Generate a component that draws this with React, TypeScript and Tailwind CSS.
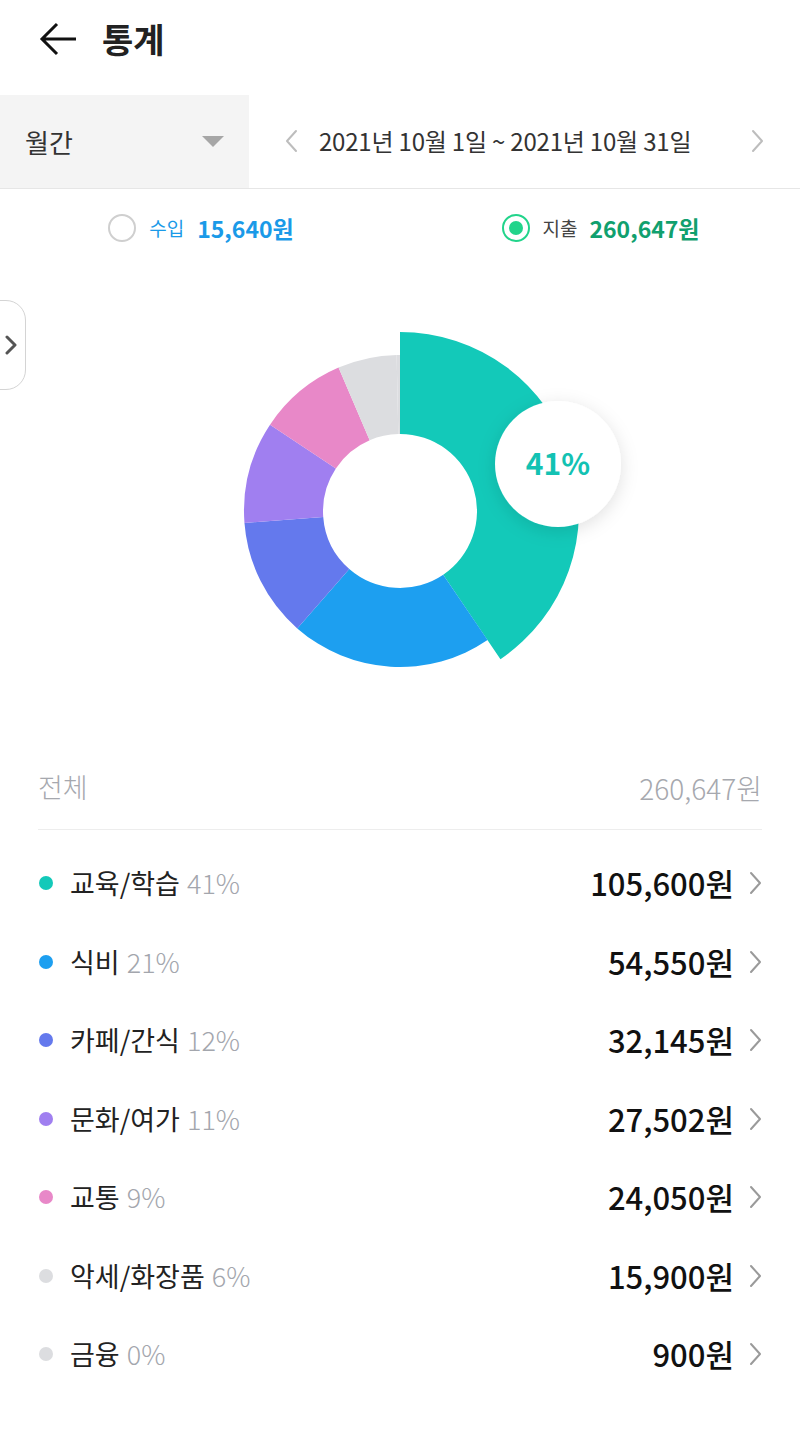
import React from 'react';

const categories = [
  { name: '교육/학습', pct: '41%', amount: 105600, color: '#13c9b9' },
  { name: '식비', pct: '21%', amount: 54550, color: '#1d9ff0' },
  { name: '카페/간식', pct: '12%', amount: 32145, color: '#6479ed' },
  { name: '문화/여가', pct: '11%', amount: 27502, color: '#a07ff0' },
  { name: '교통', pct: '9%', amount: 24050, color: '#e888c8' },
  { name: '악세/화장품', pct: '6%', amount: 15900, color: '#dcdde0' },
  { name: '금융', pct: '0%', amount: 900, color: '#dcdde0' },
];

const total = 260647;

// donut slice path, angles in degrees clockwise from top
const slicePath = (cx: number, cy: number, r1: number, r2: number, a0: number, a1: number) => {
  const rad = (a: number) => ((a - 90) * Math.PI) / 180;
  const p = (r: number, a: number) => `${cx + r * Math.cos(rad(a))} ${cy + r * Math.sin(rad(a))}`;
  const large = a1 - a0 > 180 ? 1 : 0;
  return `M ${p(r2, a0)} A ${r2} ${r2} 0 ${large} 1 ${p(r2, a1)} L ${p(r1, a1)} A ${r1} ${r1} 0 ${large} 0 ${p(r1, a0)} Z`;
};

const Donut: React.FC = () => {
  const cx = 400;
  const cy = 244;
  let start = 0;
  const slices = categories.map((c, i) => {
    const sweep = (c.amount / total) * 360;
    const d = slicePath(cx, cy, 77, i === 0 ? 179 : 156, start, start + sweep);
    start += sweep;
    return <path key={c.name} d={d} fill={c.color} />;
  });
  return (
    <svg width="800" height="473" viewBox="0 0 800 473" className="block">
      <defs>
        <filter id="bubble" x="-50%" y="-50%" width="200%" height="200%">
          <feDropShadow dx="0" dy="4" stdDeviation="9" floodColor="#000" floodOpacity="0.12" />
        </filter>
      </defs>
      {slices}
      <circle cx="558" cy="197" r="63" fill="#fff" filter="url(#bubble)" />
      <text
        x="558"
        y="208"
        textAnchor="middle"
        fontSize="30"
        fontWeight="700"
        fill="#13c2b3"
        fontFamily="'Noto Sans CJK KR', 'Noto Sans', sans-serif"
      >
        41%
      </text>
    </svg>
  );
};

const Chevron: React.FC<{ dir: 'left' | 'right'; className?: string }> = ({ dir, className }) => (
  <svg width="14" height="24" viewBox="0 0 14 24" className={className}>
    <path
      d={dir === 'left' ? 'M11 2 L2 12 L11 22' : 'M3 2 L12 12 L3 22'}
      fill="none"
      stroke="currentColor"
      strokeWidth="2"
      strokeLinecap="round"
      strokeLinejoin="round"
    />
  </svg>
);

export default function App() {
  return (
    <div
      className="w-[800px] h-[1454px] bg-white overflow-hidden text-[#222]"
      style={{ fontFamily: "'Noto Sans CJK KR', 'Noto Sans', sans-serif" }}
    >
      {/* Header */}
      <div className="h-[95px] flex items-center pl-[39px] pb-[18px]">
        <svg width="38" height="34" viewBox="0 0 38 34">
          <path d="M37 17 H3 M18 2 L3 17 L18 32" fill="none" stroke="#111" strokeWidth="3" strokeLinejoin="miter" />
        </svg>
        <span className="ml-[25px] text-[34px] font-bold leading-none">통계</span>
      </div>

      {/* Period filter */}
      <div className="h-[94px] flex border-b border-[#e6e6e6]">
        <div className="w-[249px] bg-[#f4f4f4] flex items-center justify-between pl-[25px] pr-[25px]">
          <span className="text-[26px] text-[#333]">월간</span>
          <svg width="22" height="12" viewBox="0 0 22 12">
            <path d="M0 0 H22 L11 11 Z" fill="#a6a6a6" />
          </svg>
        </div>
        <div className="flex-1 flex items-center pl-[36px] pr-[36px] pb-[2px] text-[#bdbdbd]">
          <Chevron dir="left" />
          <span className="ml-[20px] text-[24px] text-[#333] tracking-[-0.2px] whitespace-nowrap">2021년 10월 1일 ~ 2021년 10월 31일</span>
          <Chevron dir="right" className="ml-auto" />
        </div>
      </div>

      {/* Income / expense toggle */}
      <div className="h-[78px] flex items-center">
        <div className="w-1/2 flex items-center justify-center pl-[2px]">
          <span className="w-[28px] h-[28px] rounded-full border-2 border-[#cfcfcf]" />
          <span className="ml-[13px] text-[19px] text-[#1a9ae8]">수입</span>
          <span className="ml-[13px] text-[23px] font-bold text-[#1a9ae8]">15,640원</span>
        </div>
        <div className="w-1/2 flex items-center justify-center pl-[2px]">
          <span className="w-[28px] h-[28px] rounded-full border-2 border-[#22d48b] flex items-center justify-center">
            <span className="w-[14px] h-[14px] rounded-full bg-[#22d48b]" />
          </span>
          <span className="ml-[12px] text-[19px] text-[#444]">지출</span>
          <span className="ml-[12px] text-[23px] font-bold text-[#10a06e]">260,647원</span>
        </div>
      </div>

      {/* Chart */}
      <div className="relative">
        <div className="absolute left-[-20px] top-[33px] w-[46px] h-[90px] rounded-[20px] border border-[#d4d4d4] bg-white flex items-center justify-end pr-[8px] text-[#555]">
          <svg width="12" height="20" viewBox="0 0 12 20">
            <path d="M2 2 L10 10 L2 18" fill="none" stroke="currentColor" strokeWidth="3" strokeLinecap="round" strokeLinejoin="round" />
          </svg>
        </div>
        <Donut />
      </div>

      {/* List */}
      <div className="px-[38px]">
        <div className="h-[90px] flex items-center justify-between border-b border-[#ededed] pt-[6px] text-[#a6a8ae] text-[27px] font-light">
          <span>전체</span>
          <span className="text-[28px]">260,647원</span>
        </div>
        <div className="pt-[14px]">
          {categories.map((c) => (
            <div key={c.name} className="h-[78.5px] flex items-center">
              <span className="w-[14px] h-[14px] rounded-full ml-[1px]" style={{ backgroundColor: c.color }} />
              <span className="ml-[17px] text-[27px] text-[#222]">{c.name}</span>
              <span className="ml-[7px] text-[27px] font-light text-[#a3a6ad]">{c.pct}</span>
              <span className="ml-auto text-[31px] font-medium text-[#111]">{c.amount.toLocaleString('en-US')}원</span>
              <Chevron dir="right" className="ml-[14px] text-[#9a9a9a]" />
            </div>
          ))}
        </div>
      </div>
    </div>
  );
}
